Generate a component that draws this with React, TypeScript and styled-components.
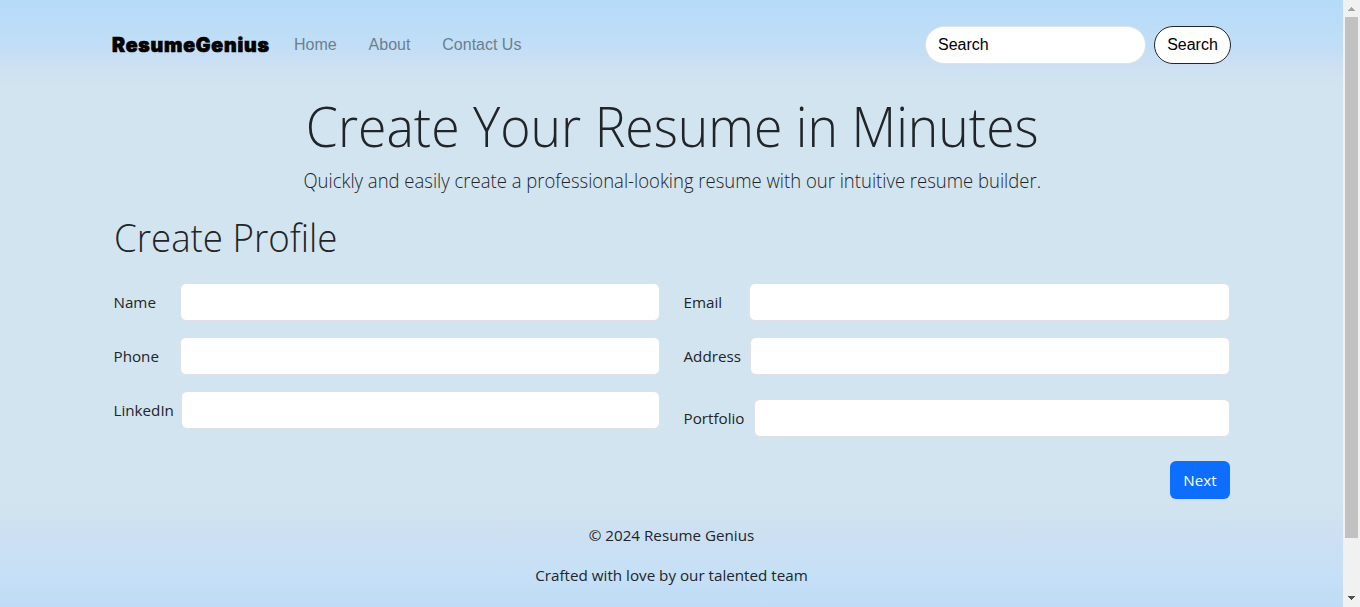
import React from "react";
import styled, { createGlobalStyle } from "styled-components";

const GlobalStyle = createGlobalStyle`
  *, *::before, *::after { box-sizing: border-box; }
  html, body, #root { margin: 0; height: 100%; }
  body { overflow: hidden; color: #212529; font-family: "Open Sans", "Noto Sans", sans-serif; font-size: 15.2px; line-height: 24px; }
  h1, h2, p { margin: 0; font-weight: 300; }
  input, button { font: inherit; }
`;

const Window = styled.div`
  display: flex;
  height: 607px;
`;

const Page = styled.div`
  flex: 1;
  display: flex;
  flex-direction: column;
  background: #d2e4ef;
`;

const Navbar = styled.nav`
  height: 89px;
  padding: 0 112px;
  display: flex;
  align-items: center;
  font-family: "Liberation Sans", Arial, sans-serif;
  font-size: 16px;
  background: linear-gradient(#b5dbfa 0, #c1def6 46px, #c9dff4 58px, #d2e4ef 86px);
`;

const Brand = styled.a`
  width: 158px;
  font-family: Inter, sans-serif;
  font-weight: 900;
  font-size: 19.5px;
  letter-spacing: 0.8px;
  color: #000;
  -webkit-text-stroke: 0.7px #000;
`;

const NavLinks = styled.div`
  display: flex;
  gap: 31.9px;
  margin-left: 24px;
  flex: 1;
  color: #6d7f8d;
`;

const SearchForm = styled.form`
  display: flex;
  gap: 8px;
`;

const SearchInput = styled.input`
  width: 221px;
  height: 38px;
  padding: 0 12px;
  border: 1px solid #dee2e6;
  border-radius: 19px;
  background: #fff;
  color: #000;
  outline: none;
  &::placeholder { color: #000; opacity: 1; }
`;

const SearchButton = styled.button`
  width: 77px;
  height: 38px;
  padding: 0;
  border: 1px solid #212529;
  border-radius: 19px;
  background: #fff;
  color: #000;
`;

const Main = styled.main`
  flex: 1;
  padding: 0 113px 0 113.5px;
`;

const Title = styled.h1`
  font-size: 55px;
  line-height: 67px;
  margin-top: 3px;
  transform: scaleX(0.94);
  text-align: center;
  white-space: nowrap;
`;

const Lead = styled.p`
  margin-top: 7px;
  font-size: 19.5px;
  line-height: 30px;
  transform: scaleX(0.948);
  text-align: center;
  white-space: nowrap;
`;

const SectionTitle = styled.h2`
  margin-top: 17px;
  font-size: 39px;
  line-height: 48px;
  transform: scaleX(0.94);
  transform-origin: left;
`;

const Fields = styled.div`
  margin-top: 22px;
  display: grid;
  grid-template-columns: 546px 546px;
  column-gap: 24px;
`;

const Column = styled.div`
  display: flex;
  flex-direction: column;
  gap: 16px;
`;

const Field = styled.label<{ $label: number; $drop?: number }>`
  display: grid;
  grid-template-columns: ${(p) => p.$label}px 1fr;
  align-items: center;
  height: 38px;
  margin-top: ${(p) => p.$drop ?? 0}px;
`;

const TextInput = styled.input`
  width: 100%;
  min-width: 0;
  height: 38px;
  border: 1px solid #dee2e6;
  border-radius: 6px;
  background: #fff;
  outline: none;
`;

const Actions = styled.div`
  display: flex;
  justify-content: flex-end;
  margin-top: 24px;
`;

const NextButton = styled.button`
  width: 60px;
  height: 38px;
  padding: 0;
  border: 0;
  border-radius: 6px;
  background: #0d6efd;
  color: #fff;
`;

const Footer = styled.footer`
  height: 108px;
  padding-top: 24px;
  display: flex;
  flex-direction: column;
  align-items: center;
  gap: 16px;
  background: linear-gradient(#d2e4ef 0, #cbdff3 46px, #c6e0f6 72px, #bfdcf6 108px);
  p { font-weight: 400; }
`;

const Scrollbar = styled.div`
  width: 17px;
  display: flex;
  flex-direction: column;
  align-items: center;
  background: #f1f1f1;
`;

const Thumb = styled.div`
  width: 13px;
  height: 521px;
  background: #c1c1c1;
`;

const Arrow = styled.svg`
  display: block;
  width: 17px;
  height: 17px;
`;

const Spacer = styled.div`
  flex: 1;
`;

type FieldSpec = { name: string; label: number; drop?: number };

const left: FieldSpec[] = [
  { name: "Name", label: 66.5 },
  { name: "Phone", label: 66.5 },
  { name: "LinkedIn", label: 67.5 },
];
const right: FieldSpec[] = [
  { name: "Email", label: 65.5 },
  { name: "Address", label: 66.5 },
  { name: "Portfolio", label: 70.5, drop: 8 },
];

const FieldColumn = ({ fields }: { fields: FieldSpec[] }) => (
  <Column>
    {fields.map((f) => (
      <Field key={f.name} $label={f.label} $drop={f.drop}>
        <span>{f.name}</span>
        <TextInput type="text" />
      </Field>
    ))}
  </Column>
);

export default function App() {
  return (
    <Window>
      <GlobalStyle />
      <Page>
        <Navbar>
          <Brand>ResumeGenius</Brand>
          <NavLinks>
            <a>Home</a>
            <a>About</a>
            <a>Contact Us</a>
          </NavLinks>
          <SearchForm>
            <SearchInput placeholder="Search" />
            <SearchButton type="button">Search</SearchButton>
          </SearchForm>
        </Navbar>
        <Main>
          <Title>Create Your Resume in Minutes</Title>
          <Lead>Quickly and easily create a professional-looking resume with our intuitive resume builder.</Lead>
          <SectionTitle>Create Profile</SectionTitle>
          <Fields>
            <FieldColumn fields={left} />
            <FieldColumn fields={right} />
          </Fields>
          <Actions>
            <NextButton type="button">Next</NextButton>
          </Actions>
        </Main>
        <Footer>
          <p>© 2024 Resume Genius</p>
          <p>Crafted with love by our talented team</p>
        </Footer>
      </Page>
      <Scrollbar>
        <Arrow viewBox="0 0 17 17" shapeRendering="crispEdges">
          <path d="M8 7h1v1h1v1h1v1h1v1H5v-1h1V9h1V8h1z" fill="#a3a3a3" />
        </Arrow>
        <Thumb />
        <Spacer />
        <Arrow viewBox="0 0 17 17" shapeRendering="crispEdges">
          <path d="M5 6h7v1h-1v1h-1v1H9v1H8V9H7V8H6V7H5z" fill="#505050" />
        </Arrow>
      </Scrollbar>
    </Window>
  );
}
